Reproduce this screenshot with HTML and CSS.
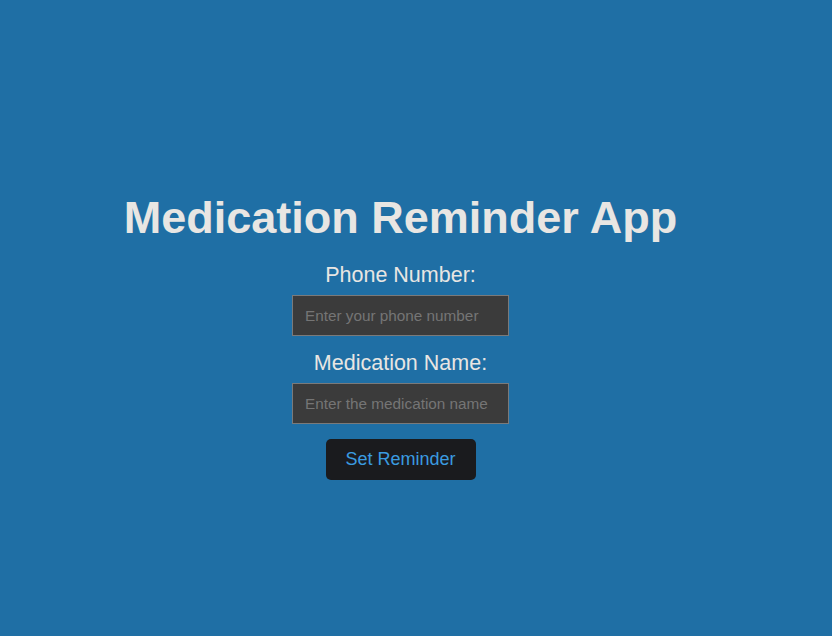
FILE: index.html
```html
<!DOCTYPE html>
<html>
<head>
<meta charset="utf-8">
<link rel="stylesheet" href="styles.css">
</head>
<body>
<div class="app">
  <h1 class="title">Medication Reminder App</h1>
  <form class="form">
    <label class="label" for="phone">Phone Number:</label>
    <input class="field" id="phone" type="text" placeholder="Enter your phone number">
    <label class="label" for="med">Medication Name:</label>
    <input class="field" id="med" type="text" placeholder="Enter the medication name">
    <button class="btn" type="button">Set Reminder</button>
  </form>
</div>
</body>
</html>
```
FILE: styles.css
```css
html, body {
  margin: 0;
  height: 100%;
  background: #1f6fa5;
}
body {
  font-family: "Liberation Sans", Arial, sans-serif;
}
.app {
  width: 801px;
  padding-top: 192px;
  display: flex;
  flex-direction: column;
  align-items: center;
}
.title {
  margin: 0;
  font-size: 45px;
  font-weight: bold;
  color: #e8e6e3;
  line-height: 52px;
}
.form {
  margin-top: 19px;
  display: flex;
  flex-direction: column;
  align-items: center;
}
.label {
  font-size: 21.5px;
  color: #e8e6e3;
  line-height: 24px;
  margin-bottom: 8px;
}
.field {
  box-sizing: border-box;
  width: 217px;
  height: 41px;
  padding: 0 12px;
  background: #3b3b3b;
  border: 1px solid #7a7a7a;
  color: #e8e6e3;
  font-family: "Liberation Sans", Arial, sans-serif;
  font-size: 15.3px;
  margin-bottom: 15px;
  outline: none;
}
.field::placeholder {
  color: #757575;
}
.btn {
  width: 150px;
  height: 41px;
  background: #1a1b1e;
  color: #3b9be0;
  border: none;
  border-radius: 5px;
  font-family: "Liberation Sans", Arial, sans-serif;
  font-size: 18px;
}
```
